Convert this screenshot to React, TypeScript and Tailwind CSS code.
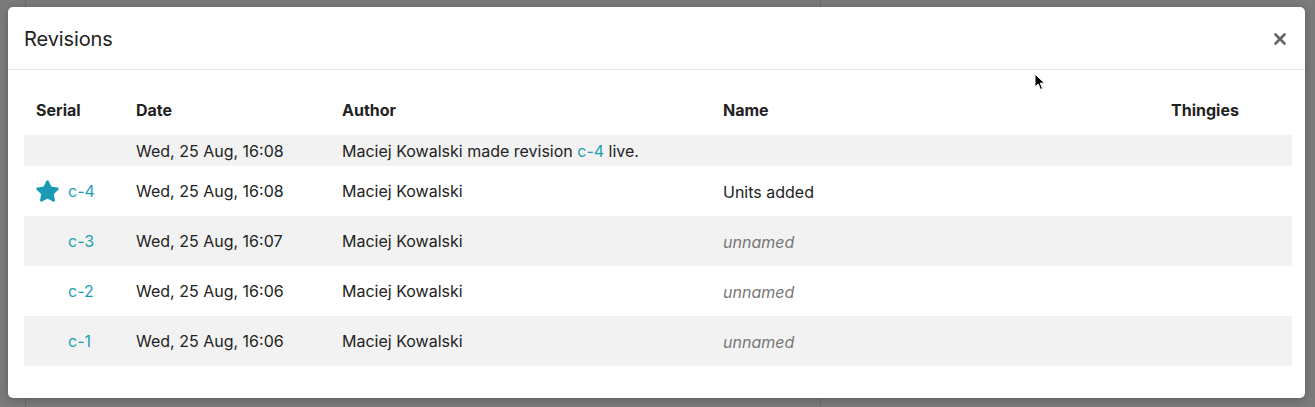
import { Star, X } from 'lucide-react'

const rows = [
  { serial: 'c-4', live: true, date: 'Wed, 25 Aug, 16:08', author: 'Maciej Kowalski', name: 'Units added' },
  { serial: 'c-3', date: 'Wed, 25 Aug, 16:07', author: 'Maciej Kowalski', name: '' },
  { serial: 'c-2', date: 'Wed, 25 Aug, 16:06', author: 'Maciej Kowalski', name: '' },
  { serial: 'c-1', date: 'Wed, 25 Aug, 16:06', author: 'Maciej Kowalski', name: '' },
]

const cols = 'grid grid-cols-[100px_206px_381px_448px_1fr]'

export default function App() {
  return (
    <div
      className="relative w-[1315px] h-[407px] overflow-hidden bg-[#7b7b7b] pt-[7px] pl-[8px] text-[#222]"
      style={{ fontFamily: 'Inter, "Noto Sans", sans-serif' }}
    >
      {/* page behind the overlay */}
      <div className="absolute left-[25px] top-0 bottom-0 w-px bg-[#6c6c6c]" />
      <div className="absolute left-[820px] top-0 bottom-0 w-px bg-[#6c6c6c]" />

      <div className="relative w-[1297px] h-[391px] bg-white rounded-[5px] shadow-[0_2px_8px_rgba(0,0,0,0.25)] flex flex-col">
        <div className="h-[63px] shrink-0 flex items-center justify-between pl-4 pr-[16px] pt-[2px] border-b border-[#e6e6e6]">
          <h2 className="text-[20px] font-normal tracking-[-0.1px]">Revisions</h2>
          <button type="button" className="text-[#666]" aria-label="Close">
            <X className="w-[18px] h-[18px]" strokeWidth={3.5} />
          </button>
        </div>

        <div className="pt-[20px] pl-4 pr-[13px]">
          <div className={`${cols} h-[45px] pb-[5px] items-center text-[16px] font-bold`}>
            <div className="pl-3">Serial</div>
            <div className="pl-3">Date</div>
            <div className="pl-3">Author</div>
            <div className="pl-3">Name</div>
            <div className="pl-3">Thingies</div>
          </div>

          <div className={`${cols} h-[31px] items-center bg-[#f2f2f2] text-[16px]`}>
            <div />
            <div className="pl-3">Wed, 25 Aug, 16:08</div>
            <div className="pl-3 col-span-3">
              Maciej Kowalski made revision <span className="text-[#1d9fb3]">c-4</span> live.
            </div>
          </div>

          {rows.map((r, i) => (
            <div
              key={r.serial}
              className={`${cols} h-[50px] items-center text-[16px] ${i % 2 === 1 ? 'bg-[#f2f2f2]' : 'bg-white'}`}
            >
              <div className="pl-3 flex items-center gap-[10px]">
                <span className="w-[22px] h-[22px] flex items-center justify-center">
                  {r.live && <Star className="w-[25px] h-[25px] shrink-0 text-[#1a9bb5]" fill="#1a9bb5" strokeWidth={1.5} strokeLinejoin="round" />}
                </span>
                <span className="text-[#1d9fb3]">{r.serial}</span>
              </div>
              <div className="pl-3">{r.date}</div>
              <div className="pl-3">{r.author}</div>
              <div className="pl-3 pt-[2px]">
                {r.name ? r.name : <span className="italic text-[#777]">unnamed</span>}
              </div>
              <div className="pl-3" />
            </div>
          ))}
        </div>
      </div>

      {/* mouse pointer */}
      <svg className="absolute left-[1034px] top-[73px]" width="12" height="18" viewBox="0 0 12 18">
        <path d="M1 1 L1 14 L4.2 11 L6.5 16.5 L8.5 15.6 L6.3 10.2 L10.5 10.2 Z" fill="#000" stroke="#fff" strokeWidth="1" />
      </svg>
    </div>
  )
}
